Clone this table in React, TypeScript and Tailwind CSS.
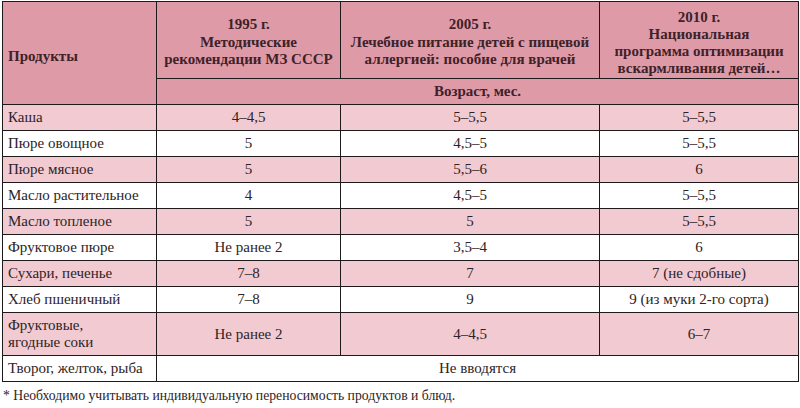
const rows: { name: string; a: string; b: string; c: string; pink: boolean; tall?: boolean; span?: boolean }[] = [
  { name: 'Каша', a: '4–4,5', b: '5–5,5', c: '5–5,5', pink: true },
  { name: 'Пюре овощное', a: '5', b: '4,5–5', c: '5–5,5', pink: false },
  { name: 'Пюре мясное', a: '5', b: '5,5–6', c: '6', pink: true },
  { name: 'Масло растительное', a: '4', b: '4,5–5', c: '5–5,5', pink: false },
  { name: 'Масло топленое', a: '5', b: '5', c: '5–5,5', pink: true },
  { name: 'Фруктовое пюре', a: 'Не ранее 2', b: '3,5–4', c: '6', pink: false },
  { name: 'Сухари, печенье', a: '7–8', b: '7', c: '7 (не сдобные)', pink: true },
  { name: 'Хлеб пшеничный', a: '7–8', b: '9', c: '9 (из муки 2-го сорта)', pink: false },
  { name: 'Фруктовые,\nягодные соки', a: 'Не ранее 2', b: '4–4,5', c: '6–7', pink: true, tall: true },
  { name: 'Творог, желток, рыба', a: 'Не вводятся', b: '', c: '', pink: false, span: true },
]

const cell = "border-[1.5px] border-[#1e1a1b] px-[5px] py-0 font-['Liberation_Serif',serif]"

export default function App() {
  return (
    <div className="w-[800px] h-[408px] bg-white pt-[1px] pl-[2px] text-[#2e2326] font-['Liberation_Serif',serif]">
      <table className="table-fixed border-collapse w-[796px] text-[15px] leading-[17px] font-['Liberation_Serif',serif]">
        <colgroup>
          <col className="w-[154px]" />
          <col className="w-[184px]" />
          <col className="w-[259px]" />
          <col className="w-[199px]" />
        </colgroup>
        <thead>
          <tr className="h-[77px] bg-[#df9aa8] font-bold text-[#3d2229]">
            <th rowSpan={2} className={`${cell} text-left align-middle pt-[6px]`}>Продукты</th>
            <th className={`${cell} text-center leading-[17.5px] pt-[5px]`}>
              1995 г.<br />Методические<br />рекомендации МЗ СССР
            </th>
            <th className={`${cell} text-center leading-[17.5px] pt-[5px]`}>
              2005 г.<br />Лечебное питание детей с пищевой<br />аллергией: пособие для врачей
            </th>
            <th className={`${cell} text-center leading-[17px] pt-[5px]`}>
              2010 г.<br />Национальная<br />программа оптимизации<br />вскармливания детей…
            </th>
          </tr>
          <tr className="h-[26px] bg-[#df9aa8] font-bold text-[#3d2229]">
            <th colSpan={3} className={`${cell} text-center`}>Возраст, мес.</th>
          </tr>
        </thead>
        <tbody>
          {rows.map((r) => (
            <tr key={r.name} className={`${r.tall ? 'h-[43px]' : 'h-[26px]'} ${r.pink ? 'bg-[#f2cbd2]' : 'bg-white'}`}>
              <td className={`${cell} text-left whitespace-pre-line`}>{r.name}</td>
              {r.span ? (
                <td colSpan={3} className={`${cell} text-center`}>{r.a}</td>
              ) : (
                <>
                  <td className={`${cell} text-center`}>{r.a}</td>
                  <td className={`${cell} text-center`}>{r.b}</td>
                  <td className={`${cell} text-center`}>{r.c}</td>
                </>
              )}
            </tr>
          ))}
        </tbody>
      </table>
      <p className="mt-[6px] pl-[1px] text-[13.7px] leading-[16px] font-['Liberation_Serif',serif]">* Необходимо учитывать индивидуальную переносимость продуктов и блюд.</p>
    </div>
  )
}
